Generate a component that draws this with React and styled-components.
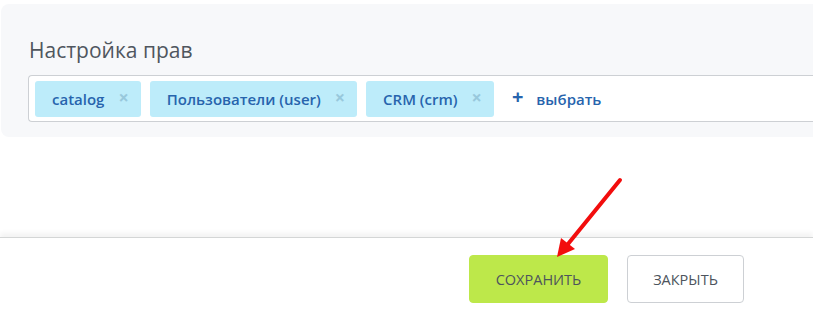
import styled, { createGlobalStyle } from "styled-components";

const Global = createGlobalStyle`
  html, body {
    margin: 0;
    padding: 0;
    background: #fff;
    font-family: "Open Sans", "Liberation Sans", sans-serif;
    overflow: hidden;
  }
`;

const tags = ["catalog", "Пользователи (user)", "CRM (crm)"];

const App = () => {
  return (
    <Page>
      <Global />
      <Panel>
        <Title>Настройка прав</Title>
        <TagBox>
          {tags.map((t) => (
            <Tag key={t}>
              {t}
              <Remove>×</Remove>
            </Tag>
          ))}
          <AddButton>
            <Plus>+</Plus>
            выбрать
          </AddButton>
        </TagBox>
      </Panel>
      <Footer>
        <Button $primary>Сохранить</Button>
        <Button>Закрыть</Button>
      </Footer>
      <Arrow width="813" height="317" viewBox="0 0 813 317">
        <line x1="620" y1="180" x2="568" y2="244" stroke="#f20d0d" strokeWidth="4" strokeLinecap="round" />
        <polygon points="557,257 561,238 575,249" fill="#f20d0d" />
      </Arrow>
    </Page>
  );
};

const Page = styled.div`
  position: relative;
  width: 813px;
  height: 317px;
  overflow: hidden;
  padding-top: 4px;
  box-sizing: border-box;
`;

const Panel = styled.section`
  margin-left: 1px;
  margin-right: -30px;
  height: 133px;
  box-sizing: border-box;
  padding: 32px 0 0 27px;
  background: #f7f8fa;
  border-radius: 8px;
`;

const Title = styled.h2`
  margin: 0 0 10px 1px;
  font-size: 21px;
  line-height: 29px;
  font-weight: 400;
  color: #4f565e;
`;

const TagBox = styled.div`
  display: flex;
  align-items: center;
  gap: 9px;
  height: 47px;
  box-sizing: border-box;
  padding: 0 6px;
  background: #fff;
  border: 1px solid #cdd0d4;
  border-right: none;
  border-radius: 4px 0 0 4px;
`;

const Tag = styled.span`
  display: flex;
  align-items: center;
  gap: 14px;
  height: 36px;
  padding: 0 12px 0 17px;
  background: #bdecfa;
  border-radius: 3px;
  color: #2764ad;
  font-size: 15px;
  font-weight: 600;
`;

const Remove = styled.span`
  color: #98c8dc;
  font-size: 18px;
  font-weight: 700;
  line-height: 1;
  margin-top: -3px;
`;

const AddButton = styled.span`
  display: flex;
  align-items: center;
  gap: 13px;
  margin-left: 9px;
  color: #2764ad;
  font-size: 15px;
  font-weight: 600;
`;

const Plus = styled.span`
  font-size: 20px;
  font-weight: 700;
  line-height: 1;
  margin-top: -3px;
`;

const Footer = styled.footer`
  margin-top: 100px;
  display: flex;
  justify-content: flex-end;
  gap: 19px;
  padding: 17px 69px 0 0;
  border-top: 1px solid #d4d6d6;
  box-shadow: 0 -4px 5px rgba(0, 0, 0, 0.05);
`;

const Button = styled.button`
  height: 48px;
  width: ${(p) => (p.$primary ? "139px" : "117px")};
  padding: 0;
  box-sizing: border-box;
  border-radius: 4px;
  border: 1px solid ${(p) => (p.$primary ? "#bde84a" : "#cdd0d4")};
  background: ${(p) => (p.$primary ? "#bde84a" : "#fff")};
  color: #4d545d;
  font-family: "Open Sans", "Liberation Sans", sans-serif;
  font-size: 14.5px;
  text-transform: uppercase;
`;

const Arrow = styled.svg`
  position: absolute;
  left: 0;
  top: 0;
  pointer-events: none;
`;

export default App;
